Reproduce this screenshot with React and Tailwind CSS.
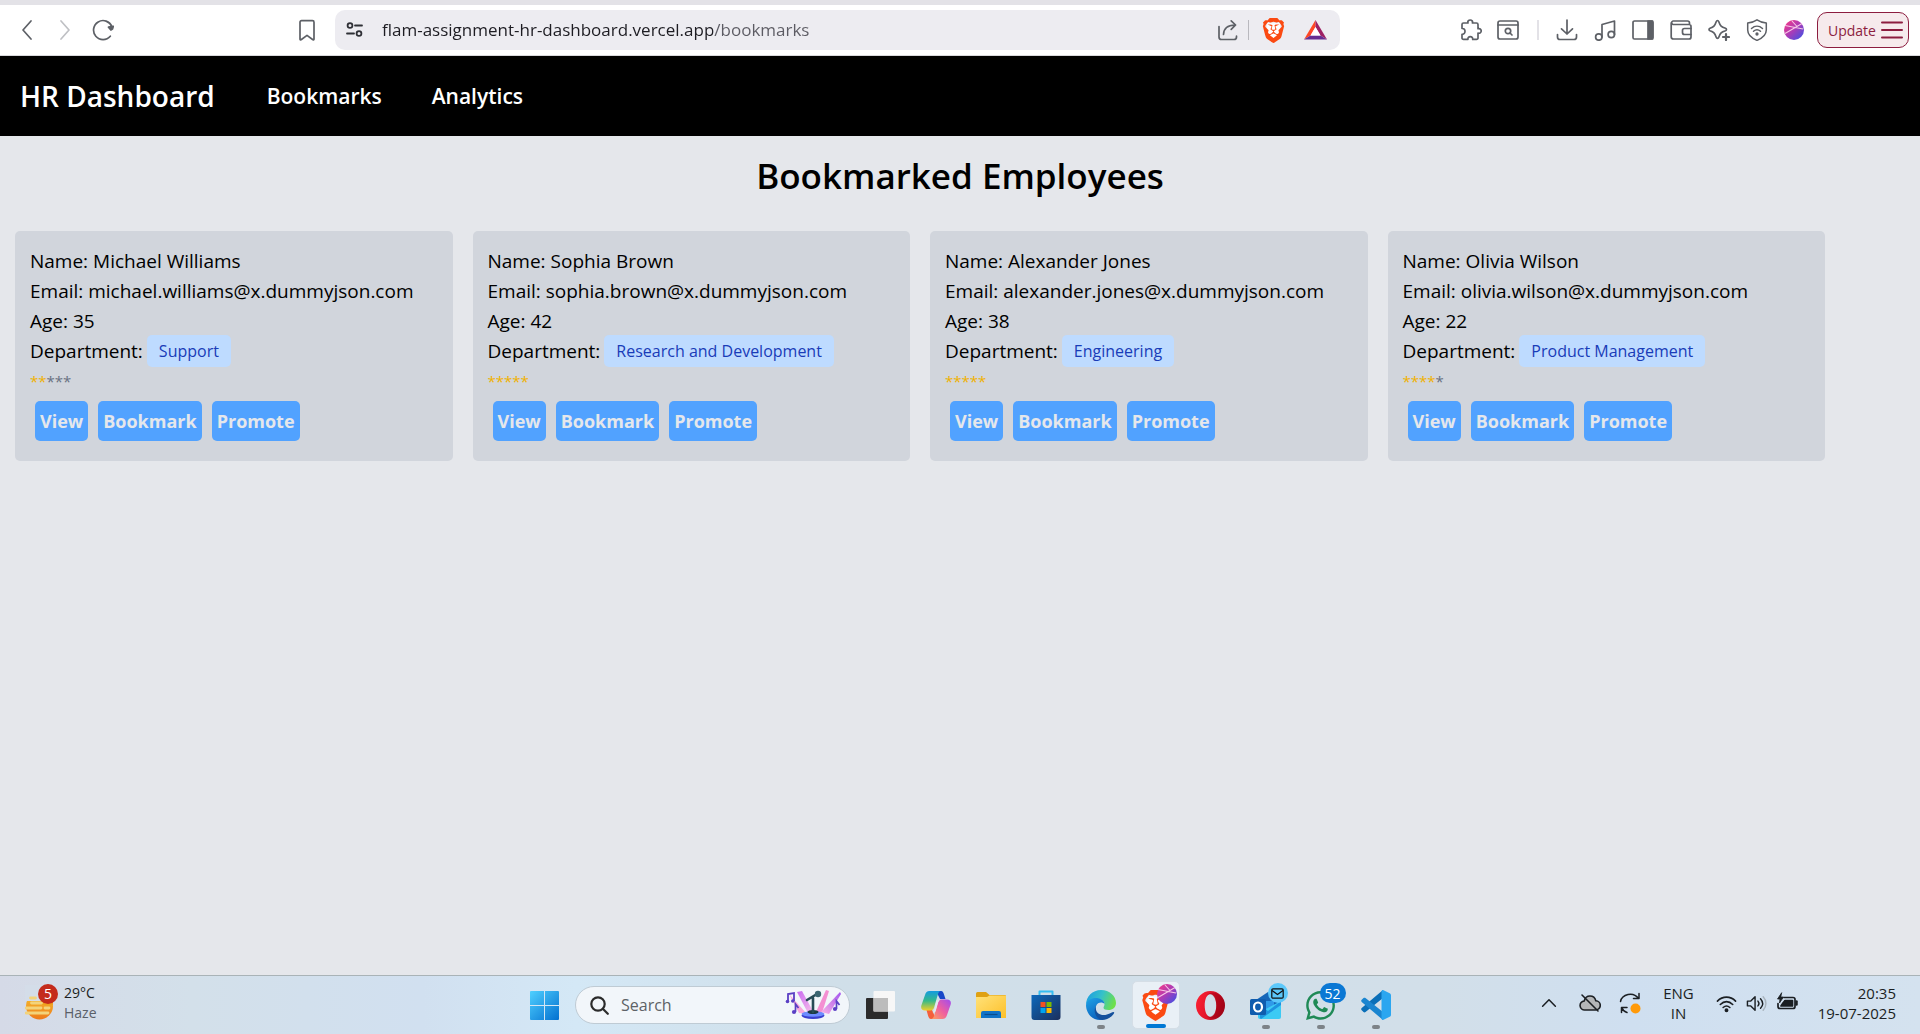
import { useState } from "react";
import { SiBrave } from "react-icons/si";
import { FaWhatsapp } from "react-icons/fa";

const employees = [
  { name: "Michael Williams", email: "michael.williams@x.dummyjson.com", age: 35, department: "Support", rating: 2 },
  { name: "Sophia Brown", email: "sophia.brown@x.dummyjson.com", age: 42, department: "Research and Development", rating: 5 },
  { name: "Alexander Jones", email: "alexander.jones@x.dummyjson.com", age: 38, department: "Engineering", rating: 5 },
  { name: "Olivia Wilson", email: "olivia.wilson@x.dummyjson.com", age: 22, department: "Product Management", rating: 4 },
];

function LineIcon({ children, size = 22, color = "#5d6066", width = 1.7 }) {
  return (
    <svg width={size} height={size} viewBox="0 0 22 22" fill="none" stroke={color} strokeWidth={width} strokeLinecap="round" strokeLinejoin="round" aria-hidden="true">
      {children}
    </svg>
  );
}

function IconButton({ label, children }) {
  return (
    <button type="button" aria-label={label} className="flex shrink-0 items-center justify-center">
      {children}
    </button>
  );
}

function BraveShield({ size }) {
  return (
    <svg width={size} height={size} viewBox="0 0 24 24" aria-hidden="true">
      <path d="M6 5h12l1 9-7 7-7-7Z" fill="#fff" />
      <SiBrave size={24} color="#fb4a12" />
    </svg>
  );
}

function ProfileOrb({ size, id }) {
  return (
    <svg width={size} height={size} viewBox="0 0 20 20" aria-hidden="true">
      <defs>
        <linearGradient id={id} x1="0.1" y1="0.1" x2="0.9" y2="0.9">
          <stop offset="0" stopColor="#ee3a8c" />
          <stop offset="0.5" stopColor="#a83cb8" />
          <stop offset="1" stopColor="#4a4fe0" />
        </linearGradient>
      </defs>
      <circle cx="10" cy="10" r="10" fill={`url(#${id})`} />
      <path d="M1 5.5 19 9M1 13.5 18 3.5M8 1l5 5.5" fill="none" stroke="#f8c6e6" strokeWidth="1.1" />
    </svg>
  );
}

function BrowserBar() {
  const [url, setUrl] = useState("flam-assignment-hr-dashboard.vercel.app/bookmarks");
  return (
    <div className="border-t-[5px] border-b border-t-[#e3e2e7] border-b-[#d9d9dc] bg-white">
      <div className="flex h-[50px] items-center pr-[11px] pl-4">
        <div className="flex items-center gap-4">
          <IconButton label="Back"><LineIcon><path d="M15 2 7 11l8 9" /></LineIcon></IconButton>
          <IconButton label="Forward"><LineIcon color="#bfc0c4"><path d="m7 2 8 9-8 9" /></LineIcon></IconButton>
          <IconButton label="Reload">
            <LineIcon>
              <path d="M18.3 17.2a9.5 9.5 0 1 1 1.6-9.6" />
              <path d="m16.5 8.2 4.8-.9-.8 2.8-1.6.9Z" fill="#5d6066" />
            </LineIcon>
          </IconButton>
        </div>
        <div className="mr-[17px] ml-[182px] flex">
          <IconButton label="Bookmark this tab"><LineIcon><path d="M4 19.500V3.200a1.500 1.500 0 0 1 1.500-1.500h11A1.500 1.500 0 0 1 18 3.200V20.300c0 .6-.6.8-1.100.4L11 16.400l-5.900 4.300c-.5.4-1.100.2-1.100-.4Z" /></LineIcon></IconButton>
        </div>
        <div className="flex h-10 min-w-0 flex-1 items-center rounded-[10px] bg-[#edecf1] pr-[12px] pl-[9px]">
          <IconButton label="Site settings">
            <LineIcon color="#2f3036" width={1.8}>
              <circle cx="6" cy="6.500" r="2.400" /><path d="M11 6.500h7" />
              <circle cx="15" cy="14.500" r="2.400" /><path d="M3 14.500h7" />
            </LineIcon>
          </IconButton>
          <input
            aria-label="Address"
            value={url}
            onChange={(e) => setUrl(e.target.value)}
            className="mr-4 ml-4 min-w-0 flex-1 bg-[linear-gradient(to_right,#1d1c22_331px,#5c5b63_331px)] bg-clip-text font-[inherit] text-[17px] text-transparent outline-none"
          />
          <IconButton label="Share">
            <LineIcon><path d="M2 7.500V18a2.500 2.500 0 0 0 2.500 2.500H17a2.500 2.500 0 0 0 2.500-2.500v-.8" /><path d="M6.500 15.500c.2-6 3.500-9.300 11.500-9.500M14.200 1.800 18.600 6l-4.400 4.300" /></LineIcon>
          </IconButton>
          <span className="mr-[12px] ml-[9px] h-5 w-px bg-[#b9b8be]" />
          <IconButton label="Brave Shields"><BraveShield size={25} /></IconButton>
          <span className="w-[17px]" />
          <IconButton label="Brave Rewards">
            <svg width="25" height="24" viewBox="0 0 25 24" aria-hidden="true">
              <path d="M12.500 2 1 21.500 7.500 17.500 12.500 9Z" fill="#ff4724" />
              <path d="M12.500 2 24 21.500 17.500 17.500 12.500 9Z" fill="#9e1f63" />
              <path d="M1 21.500h23l-6.500-4h-10Z" fill="#662d91" />
              <path d="M12.500 9 7.500 17.500h10Z" fill="#fff" />
            </svg>
          </IconButton>
        </div>
        <div className="ml-[120px] flex items-center gap-[15px]">
          <IconButton label="Extensions">
            <LineIcon><path d="M2 5.500a1.500 1.500 0 0 1 1.500-1.500H8c-.6-1.700.6-3 2.200-3s2.800 1.300 2.200 3h4.100A1.500 1.500 0 0 1 18 5.500v4.200c1.700-.6 3.200.6 3.200 2.200s-1.500 2.800-3.200 2.200v4.800a1.500 1.500 0 0 1-1.500 1.500h-3.800c.2-1.700-.9-2.700-2.400-2.700s-2.600 1-2.400 2.700H3.500A1.500 1.500 0 0 1 2 18.900v-3.600c2 .2 3-1.200 3-3s-1-3-3-2.800Z" /></LineIcon>
          </IconButton>
          <IconButton label="Search this page">
            <LineIcon><rect x="1" y="2" width="20" height="18" rx="2" /><path d="M1 6h20" /><circle cx="11" cy="12" r="2.700" /><path d="m13 14 2 2" /></LineIcon>
          </IconButton>
        </div>
        <span className="ml-[18px] h-5 w-[2px] bg-[#e3e2e7]" />
        <div className="ml-[17px] flex items-center gap-4">
          <IconButton label="Downloads"><LineIcon><path d="M11 1v14m-5.500-5.200L11 15l5.500-5.200M1.500 15.500V18A2.500 2.500 0 0 0 4 20.500h14a2.500 2.500 0 0 0 2.500-2.500v-2.500" /></LineIcon></IconButton>
          <IconButton label="Media controls"><LineIcon><circle cx="4.800" cy="18" r="3.200" /><circle cx="17.300" cy="15.500" r="3.200" /><path d="M8 18V5.500L20.500 2v13.500" /></LineIcon></IconButton>
          <IconButton label="Side panel"><LineIcon><rect x="1" y="2" width="20" height="18" rx="1.500" /><path d="M16 2h4.500v18H16Z" fill="#5d6066" /></LineIcon></IconButton>
          <IconButton label="Wallet"><LineIcon><path d="M19.500 5.500V4A2 2 0 0 0 17.500 2H3a1.800 1.800 0 0 0 0 3.500h16a2 2 0 0 1 2 2V18a2 2 0 0 1-2 2H3.500A2.300 2.300 0 0 1 1.200 17.700V3.800" /><path d="M21 9.500h-6.500a2 2 0 0 0-2 2v2a2 2 0 0 0 2 2H21" /></LineIcon></IconButton>
          <IconButton label="Leo AI"><LineIcon><path d="M9.500 1.500c.7 0 1 .4 1.300 1.200 1.500 4.300 2.500 5.300 6.700 6.600 1.300.5 1.300 1.900 0 2.400-4.200 1.300-5.200 2.300-6.700 6.600-.5 1.400-2.100 1.400-2.600 0-1.500-4.300-2.500-5.300-6.200-6.600-1.300-.5-1.300-1.900 0-2.400C5.700 8 6.700 7 8.200 2.700c.3-.8.600-1.200 1.300-1.200Z" /><path d="M18 15v6M15 18h6" strokeWidth="2.200" /></LineIcon></IconButton>
          <IconButton label="VPN"><LineIcon width={1.5}><path d="M11 .8c3 2 5.800 2.900 9.300 3.200V11c0 5-4.300 8.300-9.300 10.400C6 19.300 1.700 16 1.700 11V4C5.200 3.700 8 2.800 11 .8Z" /><path d="M5.500 9.500c3.300-3 7.700-3 11 0M7.500 12.200c2.200-1.900 4.800-1.900 7 0" /><circle cx="11" cy="15" r=".9" fill="#5d6066" /></LineIcon></IconButton>
          <IconButton label="Profile"><ProfileOrb size={20} id="profile-toolbar" /></IconButton>
        </div>
        <button type="button" className="ml-[13px] flex h-9 w-[92px] shrink-0 items-center justify-between rounded-[10px] border-[1.5px] border-[#8c1d3f] bg-[#f6eaec] pr-[5px] pl-[10px] text-[14px] text-[#8c1d3f]">
          Update
          <svg width="22" height="20" viewBox="0 0 22 20" stroke="#8c1d3f" strokeWidth="2" strokeLinecap="round" aria-hidden="true">
            <path d="M1 2.500h20M1 10h20M1 17.500h20" />
          </svg>
        </button>
      </div>
    </div>
  );
}

function SiteNav() {
  return (
    <nav className="flex h-20 items-center bg-black px-5 font-semibold text-white">
      <a href="/" className="mr-[52px] text-[28px] leading-9">HR Dashboard</a>
      <a href="/bookmarks" className="mr-[50px] text-[21px] leading-7">Bookmarks</a>
      <a href="/analytics" className="text-[21px] leading-7">Analytics</a>
    </nav>
  );
}

function ActionButton({ children }) {
  return (
    <button type="button" className="m-[5px] h-10 rounded-[5px] bg-[#51a2ff] px-[5px] text-[18px] font-bold text-gray-200">
      {children}
    </button>
  );
}

function EmployeeCard({ employee }) {
  const { name, email, age, department, rating } = employee;
  return (
    <article className="rounded-[5px] bg-gray-300 p-[15px] text-[19px] leading-[30px] text-black">
      <p>Name: {name}</p>
      <p>Email: {email}</p>
      <p>Age: {age}</p>
      <p className="flex items-center">
        Department:
        <span className="-my-px ml-1 rounded-[5px] bg-blue-200 px-3 text-[16px] leading-8 text-blue-800">{department}</span>
      </p>
      <p className="h-[30px] text-[15px]" aria-label={`Rating ${rating} of 5`}>
        {[1, 2, 3, 4, 5].map((n) => (
          <span key={n} className={n <= rating ? "text-[#f0b100]" : "text-gray-500"}>*</span>
        ))}
      </p>
      <div className="flex">
        <ActionButton>View</ActionButton>
        <ActionButton>Bookmark</ActionButton>
        <ActionButton>Promote</ActionButton>
      </div>
    </article>
  );
}

function TaskItem({ label, running, active, children }) {
  return (
    <button type="button" aria-label={label} className="flex h-[58px] w-[55px] shrink-0 items-center justify-center">
      <span className={active ? "relative flex h-12 w-12 items-center justify-center rounded-[5px] border border-[#d5dee6] bg-[#e9f0f6]" : "relative flex h-12 w-12 items-center justify-center"}>
        {children}
        {running && <span className="absolute bottom-0 h-1 w-2 rounded-full bg-[#7d8388]" />}
        {active && <span className="absolute bottom-0 h-1 w-5 rounded-full bg-[#0078d4]" />}
      </span>
    </button>
  );
}

function StartLogo() {
  return (
    <svg width="29" height="29" viewBox="0 0 29 29" aria-hidden="true">
      <defs>
        <linearGradient id="start" x1="0" y1="0" x2="1" y2="1" gradientUnits="objectBoundingBox">
          <stop offset="0" stopColor="#4fd0ff" /><stop offset="1" stopColor="#0370d0" />
        </linearGradient>
      </defs>
      <path d="M1 0h13v14H0V1a1 1 0 0 1 1-1ZM15 0h13a1 1 0 0 1 1 1v13H15ZM0 15h14v14H1a1 1 0 0 1-1-1ZM15 15h14v13a1 1 0 0 1-1 1H15Z" fill="url(#start)" />
    </svg>
  );
}

function KaraokeArt() {
  return (
    <svg width="56" height="30" viewBox="0 0 56 30" aria-hidden="true">
      <defs>
        <linearGradient id="beam-a" x1="0" y1="0" x2="1" y2="1"><stop offset="0" stopColor="#c76af0" /><stop offset="1" stopColor="#fbc4ea" /></linearGradient>
        <linearGradient id="beam-b" x1="1" y1="0" x2="0" y2="1"><stop offset="0" stopColor="#a355f0" /><stop offset="1" stopColor="#fcb3e4" /></linearGradient>
      </defs>
      <path d="m4 4 18 20-8-1Z" fill="#f9a8dc" />
      <path d="m12 2 5-1 12 22h-6Z" fill="url(#beam-a)" />
      <path d="m44 1-3-1-10 22 6 1Z" fill="#f48fd2" />
      <path d="m55 2-19 20 8 2 12-20Z" fill="url(#beam-b)" />
      <ellipse cx="28" cy="25.500" rx="11.500" ry="3.500" fill="#3a3fd0" />
      <ellipse cx="28" cy="24" rx="11.500" ry="2.800" fill="#6d8cff" />
      <ellipse cx="28" cy="22" rx="5.500" ry="2" fill="#1d3b45" />
      <path d="M28 22V8M22 10l10-6" stroke="#264b55" strokeWidth="2.600" strokeLinecap="round" />
      <circle cx="33" cy="4" r="3.200" fill="#3b6671" />
      <path d="M3 11V4l6-1v8" fill="none" stroke="#5a3fc4" strokeWidth="1.800" />
      <circle cx="2.500" cy="11.500" r="1.800" fill="#5a3fc4" /><circle cx="7.800" cy="11" r="1.800" fill="#5a3fc4" />
      <path d="M10.500 22v-8l3 4" fill="none" stroke="#5a3fc4" strokeWidth="1.700" /><circle cx="9" cy="22" r="2.100" fill="#5a3fc4" />
      <path d="M51.500 19v-8l3 4" fill="none" stroke="#5a3fc4" strokeWidth="1.700" /><circle cx="50" cy="19" r="2.100" fill="#5a3fc4" />
    </svg>
  );
}

function CopilotIcon() {
  return (
    <svg width="30" height="28" viewBox="0 0 30 28" aria-hidden="true">
      <defs>
        <linearGradient id="cop-a" x1="0" y1="0" x2="0" y2="1"><stop offset="0" stopColor="#149be0" /><stop offset="0.5" stopColor="#35b98a" /><stop offset="1" stopColor="#f0cf28" /></linearGradient>
        <linearGradient id="cop-b" x1="0" y1="1" x2="1" y2="0"><stop offset="0" stopColor="#ffa45c" /><stop offset="0.5" stopColor="#ee5fa0" /><stop offset="1" stopColor="#a04cf0" /></linearGradient>
      </defs>
      <path d="M15 0h5c2 0 2.500 2 3 3.500L24.500 8H19Z" fill="#1847c8" />
      <path d="M15 28h-5c-2 0-2.500-2-3-3.500L5.500 19H11Z" fill="#f4603c" />
      <path d="M8.500 0H20c-2 0-2.700 2-3.300 4l-3.500 12c-.6 2-1.500 3.500-4 3.500H4c-3.500 0-4.500-2.500-3.500-5.500L4 4C4.800 1.500 6 0 8.500 0Z" fill="url(#cop-a)" />
      <path d="M21.500 28H10c2 0 2.700-2 3.300-4l3.500-12c.6-2 1.500-3.500 4-3.500H26c3.500 0 4.500 2.500 3.500 5.500L26 24c-.8 2.500-2 4-4.500 4Z" fill="url(#cop-b)" />
      <path d="m15.500 9.500 3.200-.2c-1 .8-1.500 2-2 3.700l-2 7c-.3 1-.8 1.300-3.200 1.300 1-.8 1.400-1.800 1.900-3.300Z" fill="#e4eaf2" />
    </svg>
  );
}

function ExplorerIcon() {
  return (
    <svg width="30" height="28" viewBox="0 0 30 28" aria-hidden="true">
      <defs><linearGradient id="folder" x1="0" y1="0" x2="1" y2="1"><stop offset="0" stopColor="#ffe27a" /><stop offset="1" stopColor="#fdc02a" /></linearGradient></defs>
      <path d="M0 7V2.500A1.500 1.500 0 0 1 1.500 1H10l3.500 3H29a1 1 0 0 1 1 1v4H0Z" fill="#dfa113" />
      <path d="M0 6h11l2.500-1.500H30V27H0Z" fill="url(#folder)" />
      <path d="M5 27v-5a2 2 0 0 1 2-2h16a2 2 0 0 1 2 2v5Z" fill="#1173c7" />
      <path d="M8.500 23.500h13" stroke="#0b4d8c" strokeWidth="1.200" />
    </svg>
  );
}

function StoreIcon() {
  return (
    <svg width="30" height="30" viewBox="0 0 30 30" aria-hidden="true">
      <defs><linearGradient id="store" x1="0" y1="0" x2="1" y2="1"><stop offset="0" stopColor="#0c68bb" /><stop offset="1" stopColor="#1c2f5c" /></linearGradient></defs>
      <path d="M8.500 7V1.500h13V7" fill="none" stroke="#35bdf2" strokeWidth="2" strokeLinejoin="round" />
      <path d="M.5 5h29v22a3 3 0 0 1-3 3h-23a3 3 0 0 1-3-3Z" fill="url(#store)" />
      <path d="M9.500 12h5v5h-5Z" fill="#f25022" /><path d="M15.500 12h5v5h-5Z" fill="#7fba00" />
      <path d="M9.500 18h5v5h-5Z" fill="#00a4ef" /><path d="M15.500 18h5v5h-5Z" fill="#ffb900" />
    </svg>
  );
}

function EdgeIcon() {
  return (
    <svg width="30" height="30" viewBox="0 0 30 30" aria-hidden="true">
      <defs>
        <linearGradient id="edge-top" x1="0" y1="0.2" x2="1" y2="0.5"><stop offset="0" stopColor="#1b9de2" /><stop offset="0.5" stopColor="#35c1c9" /><stop offset="1" stopColor="#6ee04a" /></linearGradient>
        <linearGradient id="edge-mid" x1="0" y1="0" x2="0.5" y2="1"><stop offset="0" stopColor="#1ea3e8" /><stop offset="1" stopColor="#0b62bd" /></linearGradient>
      </defs>
      <path d="M0 15C0 6.500 6.500 0 15 0s15 6 15 13c0 4.500-3.500 7-7.500 7-3 0-5-1-5-2.300 0-1 1-1.500 1-3.700C18.500 11 15.500 9 11 9 5.500 9 1 12 0 15Z" fill="url(#edge-top)" />
      <path d="M0 15C.8 10 5.500 8 9.500 8c5 0 9 2.500 9 6-2-2.500-7-2-8.500 2-2 6 2.500 12 8 13.500C8 32 0 24.500 0 15Z" fill="url(#edge-mid)" />
      <path d="M10 16c-1.500 7 5 10.500 11 8.500 3-1 5-2.500 6.500-2.500 1 0 .8 1 .3 1.700C25 27.500 20.500 30 16 30 9.500 29 5.500 19 12 13.500c-1 .7-1.700 1.500-2 2.500Z" fill="#14509c" />
    </svg>
  );
}

function OperaIcon() {
  return (
    <svg width="29" height="29" viewBox="0 0 29 29" aria-hidden="true">
      <defs><linearGradient id="opera" x1="0" y1="0" x2="1" y2="0.3"><stop offset="0" stopColor="#ff2334" /><stop offset="0.6" stopColor="#e0142a" /><stop offset="1" stopColor="#a0091c" /></linearGradient></defs>
      <path fillRule="evenodd" d="M14.500 0a14.500 14.500 0 1 1 0 29 14.500 14.500 0 0 1 0-29Zm0 3c-3.400 0-5.800 5-5.800 11.500S11.100 26 14.500 26s5.800-5 5.800-11.500S17.900 3 14.500 3Z" fill="url(#opera)" />
      <path d="M10.500 4.500C14 0 20.500 1 24 4.300c6 5.700 6 14.700 0 20.400-3.500 3.300-10 4.300-13.500-.2 5 3.800 9.800-2 9.800-10s-4.800-13.800-9.800-10Z" fill="#a70014" opacity=".55" />
    </svg>
  );
}

function OutlookIcon() {
  return (
    <svg width="31" height="29" viewBox="0 0 31 29" aria-hidden="true">
      <path d="m6 9 12-8 12 8v4L18 22 6 13Z" fill="#1566b8" />
      <path d="M9 10h15v6L16 21l-7-4Z" fill="#2f9ae8" />
      <path d="M31 10v16a2 2 0 0 1-2 2H10a2 2 0 0 1-2-2v-4Z" fill="#3ccaf4" />
      <path d="M31 10 18 20l-8-6v12a2 2 0 0 0 1 2l20-14Z" fill="#1480d8" opacity=".75" />
      <rect x="0" y="8" width="16" height="16" rx="1.500" fill="#0f5cae" />
      <ellipse cx="8" cy="16" rx="4" ry="4.500" fill="none" stroke="#fff" strokeWidth="2.200" />
    </svg>
  );
}

function CodeIcon() {
  return (
    <svg width="30" height="30" viewBox="0 0 30 30" aria-hidden="true">
      <path d="M22 0v8L4.500 22c-.6.5-1.400.5-2 0L.7 20.300c-.7-.6-.7-1.600 0-2.200Z" fill="#0a6fb8" />
      <path d="M22 30v-8L4.500 8c-.6-.5-1.400-.5-2 0L.7 9.700c-.7.6-.7 1.600 0 2.200Z" fill="#1a85d0" />
      <path d="m22 0 6.700 3.200A2.300 2.300 0 0 1 30 5.300v19.400c0 .9-.5 1.700-1.300 2.100L22 30c-.8 0-1.500-.6-1.500-1.500v-27C20.500.6 21.200 0 22 0Z" fill="#2ba6f0" />
    </svg>
  );
}

function Taskbar() {
  return (
    <footer className="grid grid-cols-[1fr_auto_1fr] items-center border-t border-[#a9b3b7] bg-[linear-gradient(to_right,#d5dae7_0%,#d3e0ea_10%,#d1e0f0_22%,#d4e8f6_30%,#d0dfe9_42%,#d2dfe9_75%,#cfdff0_85%,#d4e2ef_100%)] text-[#1b1f23]">
      <button type="button" className="flex items-center gap-[10px] pb-1 pl-[25px] text-left text-[14px] leading-5">
        <span className="relative">
          <svg width="29" height="36" viewBox="0 0 29 36" aria-hidden="true">
            <defs><linearGradient id="haze" x1="0" y1="0" x2="0" y2="1"><stop offset="0" stopColor="#f6c52e" /><stop offset="1" stopColor="#ee7a1b" /></linearGradient></defs>
            <circle cx="14.500" cy="21" r="13.500" fill="url(#haze)" />
            <path d="M0 0h29v16H0Z" fill="#d4dde9" />
            <path d="M28 17c0 1 0 2-.1 3H17l1-4h10Z" fill="#eea11e" />
            <path d="M5.500 13h5M6.500 18h10M1 23h15M20 23h4M1 28h22" stroke="#f3d37b" strokeWidth="2.800" strokeLinecap="round" />
          </svg>
          <span className="absolute -top-[1px] left-[13px] flex h-5 w-5 items-center justify-center rounded-full bg-[#c42b1c] text-[14px] text-white">5</span>
        </span>
        <span>
          <span className="block">29°C</span>
          <span className="block text-[#5a6068]">Haze</span>
        </span>
      </button>

      <div className="flex items-center">
        <TaskItem label="Start"><StartLogo /></TaskItem>
        <label className="mx-[3px] flex h-[38px] w-[275px] items-center rounded-full border border-[#bfcbd4] bg-[#f2f6fa] pr-[8px] pl-[14px]">
          <svg width="19" height="19" viewBox="0 0 19 19" fill="none" stroke="#2b2b2b" strokeWidth="2.200" strokeLinecap="round" aria-hidden="true">
            <circle cx="8" cy="8" r="6.700" /><path d="m13 13 4.800 4.800" />
          </svg>
          <input aria-label="Search" placeholder="Search" className="ml-3 min-w-0 flex-1 bg-transparent text-[16px] outline-none placeholder:text-[#5d6266]" />
          <KaraokeArt />
        </label>
        <TaskItem label="Task view">
          <svg width="29" height="28" viewBox="0 0 29 28" aria-hidden="true">
            <rect x="0" y="7" width="22" height="21" rx="1" fill="#2b2b2b" />
            <rect x="7.500" y="0" width="21.500" height="20.500" rx="1" fill="#f7f7f7" />
            <path d="M7.500 7H22v13.500H7.500Z" fill="#bcbcbc" />
          </svg>
        </TaskItem>
        <TaskItem label="Copilot"><CopilotIcon /></TaskItem>
        <TaskItem label="File Explorer"><ExplorerIcon /></TaskItem>
        <TaskItem label="Microsoft Store"><StoreIcon /></TaskItem>
        <TaskItem label="Edge" running><EdgeIcon /></TaskItem>
        <TaskItem label="Brave" active>
          <BraveShield size={31} />
          <span className="absolute top-[2px] right-[2px]"><ProfileOrb size={20} id="profile-task" /></span>
        </TaskItem>
        <TaskItem label="Opera"><OperaIcon /></TaskItem>
        <TaskItem label="Outlook" running>
          <OutlookIcon />
          <span className="absolute top-[2px] right-[2px] flex h-5 w-5 items-center justify-center rounded-full bg-[#5cc8fa]">
            <svg width="13" height="11" viewBox="0 0 13 11" fill="none" stroke="#111" strokeWidth="1.200" aria-hidden="true"><rect x=".8" y=".8" width="11.400" height="9.400" rx="1.200" /><path d="m1 2.500 5.500 4 5.500-4" /></svg>
          </span>
        </TaskItem>
        <TaskItem label="WhatsApp" running>
          <FaWhatsapp size={33} color="#1f8a56" />
          <span className="absolute top-[2px] -right-[1px] flex h-5 w-[26px] items-center justify-center rounded-full bg-[#0b78d4] text-[14px] text-white">52</span>
        </TaskItem>
        <TaskItem label="Visual Studio Code" running><CodeIcon /></TaskItem>
      </div>

      <div className="flex items-center justify-end pr-6 pb-1 text-[15px] leading-5">
        <IconButton label="Show hidden icons"><LineIcon size={20} color="#1b1f23"><path d="m4 14.500 7-7 7 7" /></LineIcon></IconButton>
        <span className="w-5" />
        <IconButton label="OneDrive">
          <LineIcon size={22} color="#1b1f23" width={1.600}>
            <path d="M6 18a4.500 4.500 0 0 1-.8-9C6 5.500 8.500 4 11 4s5 1.500 5.800 4.800A4.600 4.600 0 0 1 16.500 18Z" fill="#b4b6b8" /><path d="m3 3 16 16" />
          </LineIcon>
        </IconButton>
        <span className="w-[18px]" />
        <IconButton label="Updates">
          <LineIcon size={22} color="#1b1f23" width={1.500}>
            <path d="M1.500 9.500C3 2.500 14 -1 19.500 6.500M20 1.500v5h-5.500M8 20.500c-2-.5-4-2-5-4.500M2.500 20.500v-5H8" />
            <circle cx="16.500" cy="16.500" r="5" fill="#ff9a0a" stroke="none" />
          </LineIcon>
        </IconButton>
        <button type="button" className="mx-[22px] text-center"><span className="block">ENG</span><span className="block">IN</span></button>
        <button type="button" aria-label="Network, volume and battery" className="flex items-center gap-[9px]">
          <LineIcon size={21} color="#1b1f23"><path d="M1.500 8.500c5.500-5.500 13.500-5.500 19 0M4.500 12c4-4 9-4 13 0M7.500 15.200c2.200-2 4.800-2 7 0" /><circle cx="11" cy="18" r="1.200" fill="#1b1f23" /></LineIcon>
          <LineIcon size={21} color="#1b1f23" width={1.500}><path d="M1.500 8.500H5L9.500 4v14L5 13.500H1.500ZM12.500 8.500c1.300 1.500 1.300 3.500 0 5M15.200 6c2.700 3 2.700 7 0 10" /><path d="M18 4c3.800 4 3.800 10 0 14" stroke="#a9b4bd" /></LineIcon>
          <LineIcon size={22} color="#1b1f23"><path d="M8 5.500h9a2 2 0 0 1 2 2v7a2 2 0 0 1-2 2H4a2 2 0 0 1-2-2v-3" /><path d="M9 8.500h7.500V14H5l2-3Z" fill="#1b1f23" /><path d="M20.500 9.500v3" strokeWidth="2.500" /><path d="M5.500 1 1.500 7H4l-.5 4 4-6H5Z" fill="#1b1f23" strokeWidth=".8" /></LineIcon>
        </button>
        <button type="button" className="ml-[20px] text-right"><span className="block">20:35</span><span className="block">19-07-2025</span></button>
      </div>
    </footer>
  );
}

export default function App() {
  return (
    <div className="flex min-h-screen flex-col bg-gray-200 font-['Open_Sans','Noto_Sans',sans-serif]">
      <BrowserBar />
      <SiteNav />
      <main className="flex-1">
        <h1 className="pt-[17px] pb-[33px] text-center text-[35px] leading-[45px] font-semibold text-black">Bookmarked Employees</h1>
        <section className="mr-[95px] ml-[15px] grid grid-cols-4 gap-5">
          {employees.map((employee) => (
            <EmployeeCard key={employee.email} employee={employee} />
          ))}
        </section>
      </main>
      <Taskbar />
    </div>
  );
}
